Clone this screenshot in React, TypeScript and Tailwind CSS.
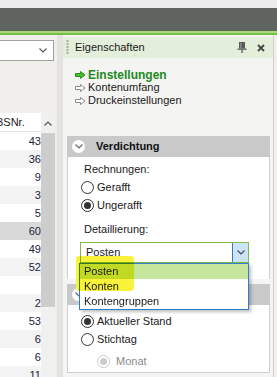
import React from "react";

function Chevron({ className = "", color = "#555555" }: { className?: string; color?: string }) {
  return (
    <svg width="8" height="5" viewBox="0 0 8 5" className={className}>
      <polyline points="0.5,0.5 4,4 7.5,0.5" fill="none" stroke={color} strokeWidth="1.1" />
    </svg>
  );
}

function Arrow({ active }: { active?: boolean }) {
  return (
    <svg width="11" height="8" viewBox="0 0 11 8">
      <path
        d="M0.5 2.5 H5.5 V0.5 L10 4 L5.5 7.5 V5.5 H0.5 Z"
        fill={active ? "#3fbf2a" : "#ffffff"}
        stroke={active ? "#2f8f22" : "#8a8a8a"}
        strokeWidth="1"
        strokeLinejoin="round"
      />
    </svg>
  );
}

function Radio({ checked, disabled, label }: { checked?: boolean; disabled?: boolean; label: string }) {
  return (
    <div className="flex items-center h-[18px]">
      <span
        className={
          disabled
            ? "w-[13px] h-[13px] rounded-full border border-[#cccccc] bg-white flex items-center justify-center"
            : "w-[13px] h-[13px] rounded-full border border-[#333333] bg-white flex items-center justify-center"
        }
      >
        {checked && (
          <span className={disabled ? "w-[7px] h-[7px] rounded-full bg-[#cccccc]" : "w-[7px] h-[7px] rounded-full bg-[#333333]"} />
        )}
      </span>
      <span className={disabled ? "ml-[6px] text-[#8a8a8a]" : "ml-[3px]"}>{label}</span>
    </div>
  );
}

function SectionHeader({ title }: { title?: string }) {
  return (
    <div className="h-[21px] bg-[#c9c9c9] flex items-center">
      <span className="ml-[5px] w-[13px] h-[13px] rounded-full bg-white flex items-center justify-center">
        <Chevron color="#666666" />
      </span>
      {title && <span className="ml-[11px] font-bold text-[#111111]">{title}</span>}
    </div>
  );
}

export default function App() {
  const rows = ["431", "362", "95", "37", "58", "604", "497", "525", "", "21", "539", "67", "63", "112"];
  return (
    <div className="w-[277px] h-[377px] overflow-hidden flex flex-col bg-[#f0efec] text-[11px] leading-none text-[#1a1a1a] font-['Liberation_Sans',Arial,sans-serif]">
      <div className="h-[8px] shrink-0 bg-[#ececec]" />
      <div className="h-[23px] shrink-0 bg-[#5f6461]" />
      <div className="h-[2px] shrink-0 bg-[#a9d880]" />
      <div className="h-[2px] shrink-0 bg-[#77c043]" />
      <div className="flex flex-1 min-h-0">
        {/* left panel */}
        <div className="w-[57px] shrink-0 flex flex-col overflow-hidden bg-[#f0efec]">
          <div className="mt-[5px] -ml-[1px] w-[55px] h-[21px] shrink-0 border border-[#a0a0a0] bg-white flex items-center justify-end pr-[6px]">
            <Chevron color="#555555" />
          </div>
          <div className="mt-[52px] flex flex-1 min-h-0">
            <div className="w-[41px] shrink-0 overflow-hidden flex flex-col bg-white">
              <div className="h-[19px] shrink-0 flex items-center border-b border-[#e2e2e2] bg-white">
                <span className="-ml-[4px] whitespace-nowrap">BSNr.</span>
              </div>
              {rows.map((v, i) => (
                <div
                  key={i}
                  className={
                    i === 5
                      ? "h-[18px] shrink-0 w-[47px] flex items-center justify-end bg-[#d9d9d9]"
                      : i % 2 === 1
                      ? "h-[18px] shrink-0 w-[47px] flex items-center justify-end bg-[#f3f3f3]"
                      : "h-[18px] shrink-0 w-[47px] flex items-center justify-end bg-white"
                  }
                >
                  <span className="text-[#1c2440]">{v}</span>
                </div>
              ))}
            </div>
            <div className="w-[14px] shrink-0 flex flex-col bg-[#f0f0f0]">
              <div className="h-[20px] shrink-0 flex items-center justify-center">
                <svg width="8" height="5" viewBox="0 0 8 5">
                  <polyline points="0.5,4.5 4,1 7.5,4.5" fill="none" stroke="#555555" strokeWidth="1.2" />
                </svg>
              </div>
              <div className="h-[174px] shrink-0 bg-[#cdcdcd]" />
            </div>
            <div className="w-[2px] shrink-0 bg-[#f0efec]" />
          </div>
        </div>
        {/* splitter */}
        <div className="w-[6px] shrink-0 bg-[#e4e3e0]" />
        {/* right panel */}
        <div className="flex-1 flex min-w-0">
          <div className="w-[210px] shrink-0 flex flex-col bg-[#f4f4f2]">
            <div className="mt-[2px] h-[21px] shrink-0 bg-[#e3efda] flex items-center">
              <svg width="3" height="15" viewBox="0 0 3 15" className="ml-[3px]">
                {[0, 3, 6, 9, 12].map((y) => (
                  <rect key={y} x="0.5" y={y} width="2" height="2" fill="#a8b0a0" />
                ))}
              </svg>
              <span className="ml-[6px] text-[#1a1a1a]">Eigenschaften</span>
              <svg width="10" height="11" viewBox="0 0 10 11" className="ml-auto">
                <rect x="2" y="0" width="6" height="6.5" fill="#5a5a5a" />
                <rect x="3" y="1" width="1.5" height="5" fill="#8a8a8a" />
                <rect x="0.5" y="6.5" width="9" height="1.3" fill="#5a5a5a" />
                <rect x="4.4" y="7.5" width="1.3" height="3.5" fill="#5a5a5a" />
              </svg>
              <svg width="8" height="8" viewBox="0 0 8 8" className="ml-[10px] mr-[8px]">
                <path d="M1 1 L7 7 M7 1 L1 7" stroke="#444444" strokeWidth="1.8" />
              </svg>
            </div>
            <div className="pt-[10px] pl-[12px] flex flex-col">
              <div className="h-[13px] flex items-center">
                <Arrow active />
                <span className="ml-[2px] font-bold text-[12px] text-[#1f8a1f]">Einstellungen</span>
              </div>
              <div className="h-[13px] flex items-center">
                <Arrow />
                <span className="ml-[2px]">Kontenumfang</span>
              </div>
              <div className="h-[13px] flex items-center">
                <Arrow />
                <span className="ml-[2px]">Druckeinstellungen</span>
              </div>
            </div>
            {/* Verdichtung */}
            <div className="mt-[29px] ml-[4px] mr-[3px] flex flex-col">
              <SectionHeader title="Verdichtung" />
              <div className="bg-white border-x border-[#cfcfcf] pl-[13px] pt-[3px] pb-[16px] flex flex-col">
                <div className="h-[18px] flex items-center pl-[3px]">Rechnungen:</div>
                <Radio label="Gerafft" />
                <Radio checked label="Ungerafft" />
                <div className="mt-[6px] h-[18px] flex items-center pl-[3px]">Detaillierung:</div>
                <div className="relative mt-[4px] -ml-[1px] w-[169px] h-[21px] z-10">
                  <div className="h-full border border-[#86b84a] bg-white flex items-center">
                    <span className="pl-[5px] flex-1">Posten</span>
                    <div className="w-[16px] h-full bg-[#cce4f7] border-l border-[#3d78b0] flex items-center justify-center">
                      <Chevron color="#3a4a5a" />
                    </div>
                  </div>
                  <div className="absolute left-[-1px] top-full w-[170px] border border-[#2f7fcf] bg-white flex flex-col shadow-[2px_2px_3px_rgba(0,0,0,0.25)]">
                    <div className="h-[15px] flex items-center pl-[4px] bg-[#c6e69e]">Posten</div>
                    <div className="h-[15px] flex items-center pl-[4px]">Konten</div>
                    <div className="h-[15px] flex items-center pl-[4px]">Kontengruppen</div>
                  </div>
                  <div className="absolute left-[-4px] top-[14px] w-[58px] h-[35px] rounded-[4px] bg-[#f8f238] mix-blend-multiply" />
                </div>
              </div>
            </div>
            {/* second section */}
            <div className="mt-[5px] ml-[4px] mr-[3px] flex flex-col">
              <SectionHeader />
              <div className="bg-white border-x border-b border-[#cfcfcf] pl-[13px] pt-[7px] pb-[2px] flex flex-col">
                <Radio checked label="Aktueller Stand" />
                <Radio label="Stichtag" />
                <div className="mt-[4px] pl-[16px]">
                  <Radio checked disabled label="Monat" />
                </div>
              </div>
            </div>
          </div>
          <div className="w-[4px] shrink-0 flex bg-[#f0efec]">
            <div className="w-[1px] h-full bg-[#cfcfcf]" />
          </div>
        </div>
      </div>
    </div>
  );
}
